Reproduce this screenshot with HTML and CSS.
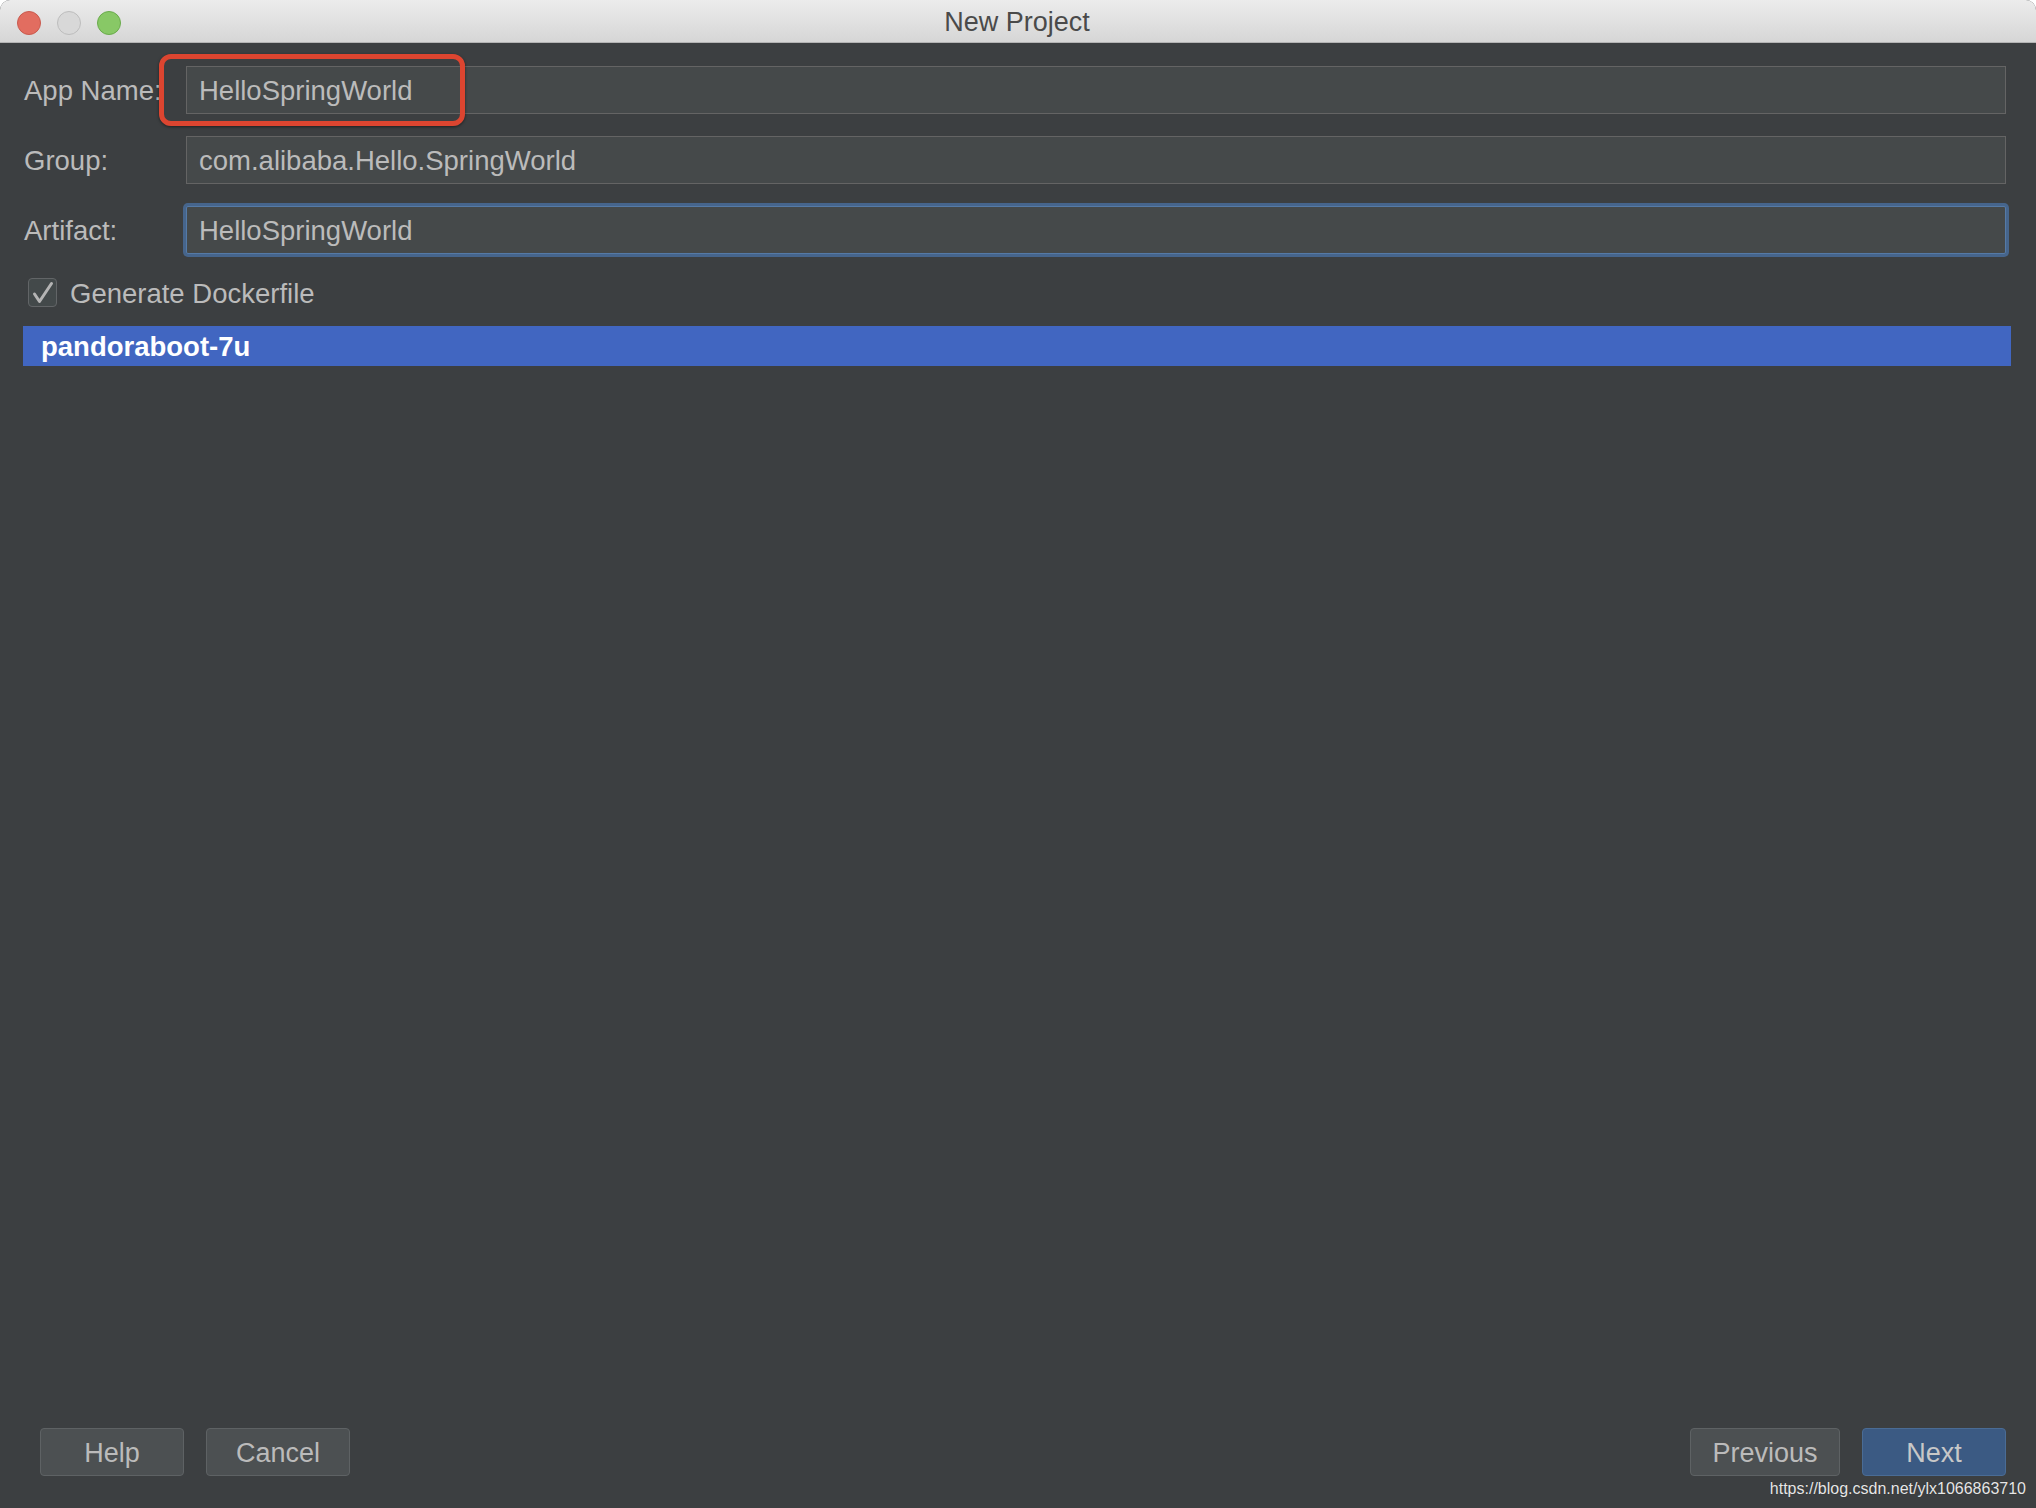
FILE: index.html
```html
<!DOCTYPE html>
<html>
<head>
<meta charset="utf-8">
<title>New Project</title>
<link rel="stylesheet" href="styles.css">
</head>
<body>
<div class="window">
  <div class="titlebar">
    <div class="lights">
      <span class="light red"></span>
      <span class="light gray"></span>
      <span class="light green"></span>
    </div>
    <div class="title">New Project</div>
  </div>
  <div class="content">
    <div class="form">
      <div class="row">
        <label class="label">App Name:</label>
        <div class="field">HelloSpringWorld</div>
      </div>
      <div class="row">
        <label class="label">Group:</label>
        <div class="field">com.alibaba.Hello.SpringWorld</div>
      </div>
      <div class="row">
        <label class="label">Artifact:</label>
        <div class="field focused">HelloSpringWorld</div>
      </div>
    </div>
    <div class="check-row">
      <span class="checkbox">
        <svg width="29" height="29" viewBox="0 0 29 29"><path d="M6.5 16 L11.5 23.5 L23.5 5.5" fill="none" stroke="#b4b4b4" stroke-width="3" stroke-linecap="round" stroke-linejoin="round"/></svg>
      </span>
      <span class="check-label">Generate Dockerfile</span>
    </div>
    <div class="list">
      <div class="list-item selected">pandoraboot-7u</div>
    </div>
    <div class="highlight"></div>
  </div>
  <div class="footer">
    <div class="btn-group">
      <button class="btn">Help</button>
      <button class="btn">Cancel</button>
    </div>
    <div class="btn-group">
      <button class="btn wide">Previous</button>
      <button class="btn primary">Next</button>
    </div>
  </div>
  <div class="watermark">https://blog.csdn.net/ylx1066863710</div>
</div>
</body>
</html>
```

FILE: styles.css
```css
html, body {
  margin: 0;
  padding: 0;
  background: #ffffff;
}
body {
  font-family: "Liberation Sans", Arial, sans-serif;
  font-size: 27.5px;
  color: #bbbbbb;
}
.window {
  position: relative;
  width: 2036px;
  height: 1508px;
  background: #3c3f41;
  border-radius: 10px 10px 0 0;
  overflow: hidden;
  display: flex;
  flex-direction: column;
}
.titlebar {
  position: relative;
  height: 42px;
  flex: none;
  background: linear-gradient(#ececec, #d6d6d6);
  border-bottom: 1px solid #b4b4b4;
  display: flex;
  align-items: center;
  justify-content: center;
}
.lights {
  position: absolute;
  left: 17px;
  top: 11px;
  display: flex;
  gap: 16px;
}
.light {
  width: 24px;
  height: 24px;
  border-radius: 50%;
  box-sizing: border-box;
}
.light.red { background: #e26d60; border: 1px solid #c95a4e; }
.light.gray { background: #d8d8d8; border: 1px solid #bdbdbd; }
.light.green { background: #88c866; border: 1px solid #6aab4c; }
.title {
  color: #4a4a4a;
  font-size: 27px;
  margin-left: -2px;
  padding-top: 2px;
}
.content {
  position: relative;
  flex: 1;
  padding: 23px 25px 0 23px;
}
.form {
  display: flex;
  flex-direction: column;
  gap: 22px;
}
.row {
  display: flex;
  align-items: center;
  height: 48px;
}
.label {
  width: 163px;
  flex: none;
  padding-left: 1px;
  padding-top: 2px;
  box-sizing: border-box;
}
.field {
  flex: 1;
  margin-right: 5px;
  height: 48px;
  box-sizing: border-box;
  background: #45494a;
  border: 1px solid #646464;
  padding-left: 12px;
  padding-top: 2px;
  display: flex;
  align-items: center;
  color: #bbbbbb;
}
.field.focused {
  border: 1px solid #557aa6;
  box-shadow: 0 0 0 3px #46658c;
  border-radius: 2px;
}
.check-row {
  margin-top: 24px;
  display: flex;
  align-items: center;
  gap: 13px;
  padding-left: 5px;
  height: 29px;
}
.check-label {
  padding-top: 2px;
}
.checkbox {
  width: 29px;
  height: 29px;
  box-sizing: border-box;
  border: 1px solid #626567;
  border-radius: 4px;
  background: #43494a;
  display: flex;
  align-items: center;
  justify-content: center;
  position: relative;
}
.checkbox svg {
  position: absolute;
  left: -1px;
  top: -1px;
}
.list {
  margin-top: 19px;
}
.list-item {
  height: 40px;
  box-sizing: border-box;
  display: flex;
  align-items: center;
  padding-left: 18px;
  padding-top: 2px;
}
.list-item.selected {
  background: #4166c1;
  color: #ffffff;
  font-weight: bold;
}
.highlight {
  position: absolute;
  left: 159px;
  top: 11px;
  width: 306px;
  height: 72px;
  box-sizing: border-box;
  border: 5px solid #dc4530;
  border-radius: 12px;
  box-shadow: 0 1px 3px rgba(0,0,0,0.5);
}
.footer {
  flex: none;
  display: flex;
  justify-content: space-between;
  padding: 0 30px 32px 40px;
}
.btn-group {
  display: flex;
  gap: 22px;
}
.btn {
  width: 144px;
  height: 48px;
  box-sizing: border-box;
  background: #4c5052;
  border: 1px solid #5e6264;
  border-radius: 4px;
  color: #bbbbbb;
  font-family: "Liberation Sans", Arial, sans-serif;
  font-size: 27px;
  padding: 2px 0 0 0;
}
.btn.wide {
  width: 150px;
}
.btn.primary {
  background: #3b5a83;
  border-color: #4a6c95;
  color: #c8c8c8;
}
.watermark {
  position: absolute;
  right: 10px;
  bottom: 10px;
  font-size: 16px;
  color: #e6e6e6;
  text-shadow: 0 0 1px rgba(0,0,0,0.4);
}
```
